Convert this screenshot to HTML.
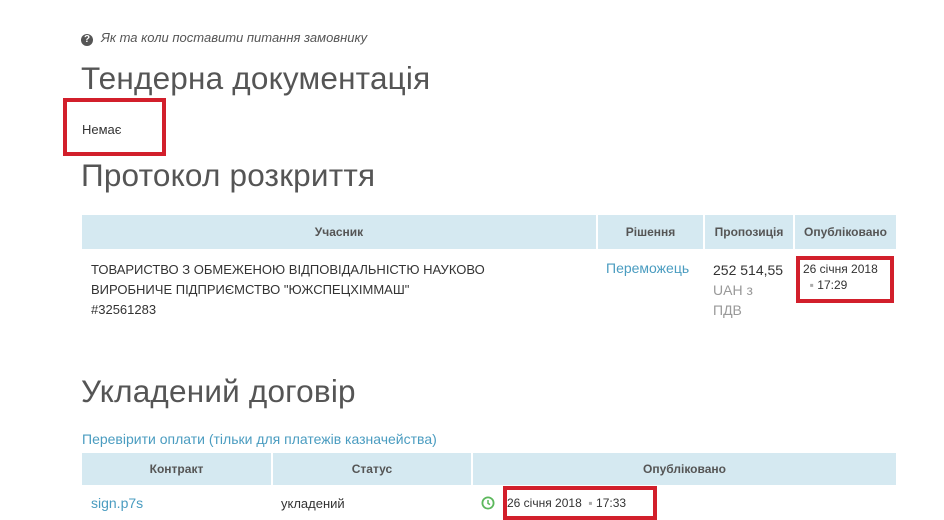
<!DOCTYPE html><html><head><meta charset="utf-8"><style>
body{margin:0;width:944px;height:515px;background:#fff;position:relative;overflow:hidden;font-family:"Liberation Sans","DejaVu Sans",sans-serif;color:#333}
.a{position:absolute;white-space:nowrap}
h{position:absolute;font-size:31.5px;color:#555;font-weight:normal;white-space:nowrap;letter-spacing:0.2px}
.th{position:absolute;background:#d5e9f1;font-size:12px;font-weight:bold;color:#555;text-align:center}
.box{position:absolute;border:4px solid #d21f2b;box-sizing:border-box}
.blue{color:#4a9cc0}
</style></head><body>
<div class="a" style="left:81px;top:30px;font-size:13px;font-style:italic;color:#555"><span style="display:inline-block;width:12px;height:12px;border-radius:50%;background:#555;color:#fff;font-size:10px;font-style:normal;font-weight:bold;text-align:center;line-height:12px;margin-right:8px">?</span>Як та коли поставити питання замовнику</div>
<h style="left:81px;top:60px">Тендерна документація</h>
<div class="box" style="left:63px;top:98px;width:103px;height:58px"></div>
<div class="a" style="left:82px;top:122px;font-size:13px">Немає</div>
<h style="left:81px;top:157px">Протокол розкриття</h>
<div class="th" style="left:82px;top:215px;width:514px;height:34px;line-height:34px">Учасник</div>
<div class="th" style="left:598px;top:215px;width:105px;height:34px;line-height:34px">Рішення</div>
<div class="th" style="left:705px;top:215px;width:88px;height:34px;line-height:34px">Пропозиція</div>
<div class="th" style="left:795px;top:215px;width:101px;height:34px;line-height:34px">Опубліковано</div>
<div class="a" style="left:91px;top:260px;font-size:13px;line-height:20px">ТОВАРИСТВО З ОБМЕЖЕНОЮ ВІДПОВІДАЛЬНІСТЮ НАУКОВО<br>ВИРОБНИЧЕ ПІДПРИЄМСТВО "ЮЖСПЕЦХІММАШ"<br>#32561283</div>
<div class="a blue" style="left:606px;top:260px;font-size:14px">Переможець</div>
<div class="a" style="left:713px;top:260px;font-size:14px;line-height:20px">252 514,55<br><span style="color:#999">UAH з<br>ПДВ</span></div>
<div class="box" style="left:796px;top:256px;width:98px;height:47px"></div>
<div class="a" style="left:803px;top:261px;font-size:12px;line-height:16px">26 січня 2018<br>&nbsp;&nbsp;<span style="color:#aaa">▪</span> 17:29</div>
<h style="left:81px;top:373px">Укладений договір</h>
<div class="a blue" style="left:82px;top:431px;font-size:14px">Перевірити оплати (тільки для платежів казначейства)</div>
<div class="th" style="left:82px;top:453px;width:189px;height:32px;line-height:32px">Контракт</div>
<div class="th" style="left:273px;top:453px;width:198px;height:32px;line-height:32px">Статус</div>
<div class="th" style="left:473px;top:453px;width:423px;height:32px;line-height:32px">Опубліковано</div>
<div class="a blue" style="left:91px;top:495px;font-size:14px">sign.p7s</div>
<div class="a" style="left:281px;top:496px;font-size:13px">укладений</div>
<svg class="a" style="left:481px;top:496px" width="14" height="14" viewBox="0 0 14 14"><circle cx="7" cy="7" r="5.6" fill="none" stroke="#5cb85c" stroke-width="1.8"/><path d="M7 4v3.3l2 1.3" fill="none" stroke="#5cb85c" stroke-width="1.5"/></svg>
<div class="box" style="left:503px;top:486px;width:154px;height:34px"></div>
<div class="a" style="left:507px;top:496px;font-size:12px">26 січня 2018 &nbsp;<span style="color:#aaa">▪</span> 17:33</div>
</body></html>
